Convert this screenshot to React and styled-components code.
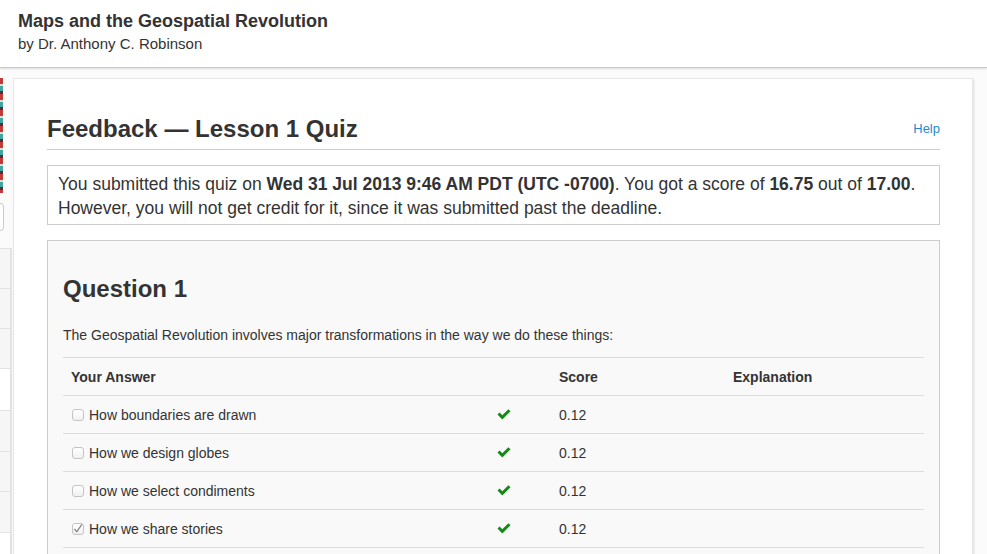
import React from "react";
import styled, { createGlobalStyle } from "styled-components";

const Global = createGlobalStyle`
  html, body { margin: 0; padding: 0; background: #fbfbfb; }
  body { font-family: "Liberation Sans", Arial, Helvetica, sans-serif; color: #333; overflow: hidden; }
  * { box-sizing: border-box; }
`;

const Header = styled.header`
  height: 68px;
  background: #fff;
  border-bottom: 1px solid #c9c9c9;
  box-shadow: 0 1px 2px rgba(0,0,0,0.12);
  padding: 11px 18px 0;
`;
const Title = styled.h1`
  margin: 0;
  font-size: 18px;
  line-height: 21px;
  font-weight: bold;
  color: #333;
`;
const Subtitle = styled.div`
  margin-top: 3px;
  font-size: 15px;
  line-height: 18px;
  color: #333;
`;

const Body = styled.div`
  display: flex;
  align-items: flex-start;
  padding-top: 10px;
`;

const Sidebar = styled.aside`
  width: 12px;
  flex: none;
  display: flex;
  flex-direction: column;
`;
const Banner = styled.div`
  width: 3px;
  height: 115px;
  background: repeating-linear-gradient(180deg, #c0393b 0 6px, #e8d9c8 6px 8px, #3fa7a3 8px 13px, #5b2f3a 13px 16px);
`;
const SideButton = styled.div`
  margin-top: 10px;
  width: 4px;
  height: 28px;
  border: 1px solid #ccc;
  border-left: none;
  border-radius: 0 4px 4px 0;
  background: #fff;
`;
const SideList = styled.div`
  margin-top: 17px;
  border-right: 2px solid #e2e2e2;
  border-top: 1px solid #e2e2e2;
`;
const SideItem = styled.div`
  height: ${p => p.$h}px;
  background: ${p => (p.$plain ? "#fff" : "#f6f6f6")};
  border-bottom: 1px solid #e2e2e2;
`;

const Card = styled.main`
  margin-left: 1px;
  width: 960px;
  min-height: 500px;
  background: #fff;
  border: 1px solid #e6e6e6;
  box-shadow: 1px 1px 2px rgba(0,0,0,0.12);
  padding: 35px 32px 0 33px;
`;

const TitleRow = styled.div`
  display: flex;
  align-items: center;
  justify-content: space-between;
  border-bottom: 1px solid #ccc;
  padding-bottom: 6px;
`;
const PageTitle = styled.h2`
  margin: 0;
  font-size: 24px;
  line-height: 29px;
  font-weight: bold;
  color: #333;
`;
const HelpLink = styled.a`
  font-size: 13px;
  color: #1f88d6;
  text-decoration: none;
`;

const Notice = styled.div`
  margin-top: 15px;
  border: 1px solid #ccc;
  padding: 6px 10px 4px;
  font-size: 17.5px;
  line-height: 24px;
  color: #333;
`;

const QuestionBox = styled.section`
  margin-top: 15px;
  border: 1px solid #ccc;
  background: #f9f9f9;
  padding: 33px 15px 0;
  min-height: 400px;
`;
const QuestionTitle = styled.h3`
  margin: 0;
  font-size: 24px;
  line-height: 29px;
  font-weight: bold;
  color: #333;
`;
const QuestionText = styled.p`
  margin: 22px 0 12px;
  font-size: 14px;
  line-height: 20px;
`;

const Table = styled.div`
  border-top: 1px solid #ddd;
`;
const Row = styled.div`
  display: grid;
  grid-template-columns: 426px 62px 174px 1fr;
  height: 38px;
  align-items: center;
  border-bottom: 1px solid #ddd;
  font-size: 14px;
  font-weight: ${p => (p.$head ? "bold" : "normal")};
`;
const Cell = styled.div`
  padding-left: 8px;
  display: flex;
  align-items: center;
`;
const Box = styled.span`
  width: 12px;
  height: 12px;
  border: 1px solid #c4c4c4;
  border-radius: 3px;
  background: linear-gradient(#fff, #f1f1f1);
  margin: 0 5px 0 1px;
  display: inline-flex;
  align-items: center;
  justify-content: center;
`;

const Check = () => (
  <svg width="14" height="11" viewBox="0 0 14 11">
    <path d="M0.5 5.6 L2.6 3.5 L5.3 6.2 L11.4 0.2 L13.5 2.3 L5.3 10.4 Z" fill="#138a13" />
  </svg>
);

const Tick = () => (
  <svg width="11" height="11" viewBox="0 0 11 11">
    <path d="M1.5 6 L4.2 9 L9.8 1" stroke="#8a8a8a" strokeWidth="1.4" fill="none" />
  </svg>
);

const answers = [
  { text: "How boundaries are drawn", checked: false },
  { text: "How we design globes", checked: false },
  { text: "How we select condiments", checked: false },
  { text: "How we share stories", checked: true },
  { text: "How we respond to disasters", checked: true },
];

const sideRows = [
  { h: 40 }, { h: 40 }, { h: 40 }, { h: 42, plain: true }, { h: 41 }, { h: 40 }, { h: 41 }, { h: 40, plain: true },
];

export default function App() {
  return (
    <>
      <Global />
      <Header>
        <Title>Maps and the Geospatial Revolution</Title>
        <Subtitle>by Dr. Anthony C. Robinson</Subtitle>
      </Header>
      <Body>
        <Sidebar>
          <Banner />
          <SideButton />
          <SideList>
            {sideRows.map((r, i) => (
              <SideItem key={i} $h={r.h} $plain={r.plain} />
            ))}
          </SideList>
        </Sidebar>
        <Card>
          <TitleRow>
            <PageTitle>Feedback — Lesson 1 Quiz</PageTitle>
            <HelpLink href="#">Help</HelpLink>
          </TitleRow>
          <Notice>
            You submitted this quiz on <b>Wed 31 Jul 2013 9:46 AM PDT (UTC -0700)</b>. You got a score of <b>16.75</b> out of <b>17.00</b>.
            However, you will not get credit for it, since it was submitted past the deadline.
          </Notice>
          <QuestionBox>
            <QuestionTitle>Question 1</QuestionTitle>
            <QuestionText>The Geospatial Revolution involves major transformations in the way we do these things:</QuestionText>
            <Table>
              <Row $head>
                <Cell>Your Answer</Cell>
                <Cell />
                <Cell>Score</Cell>
                <Cell>Explanation</Cell>
              </Row>
              {answers.map((a, i) => (
                <Row key={i}>
                  <Cell>
                    <Box>{a.checked && <Tick />}</Box>
                    {a.text}
                  </Cell>
                  <Cell><Check /></Cell>
                  <Cell>0.12</Cell>
                  <Cell />
                </Row>
              ))}
            </Table>
          </QuestionBox>
        </Card>
      </Body>
    </>
  );
}
